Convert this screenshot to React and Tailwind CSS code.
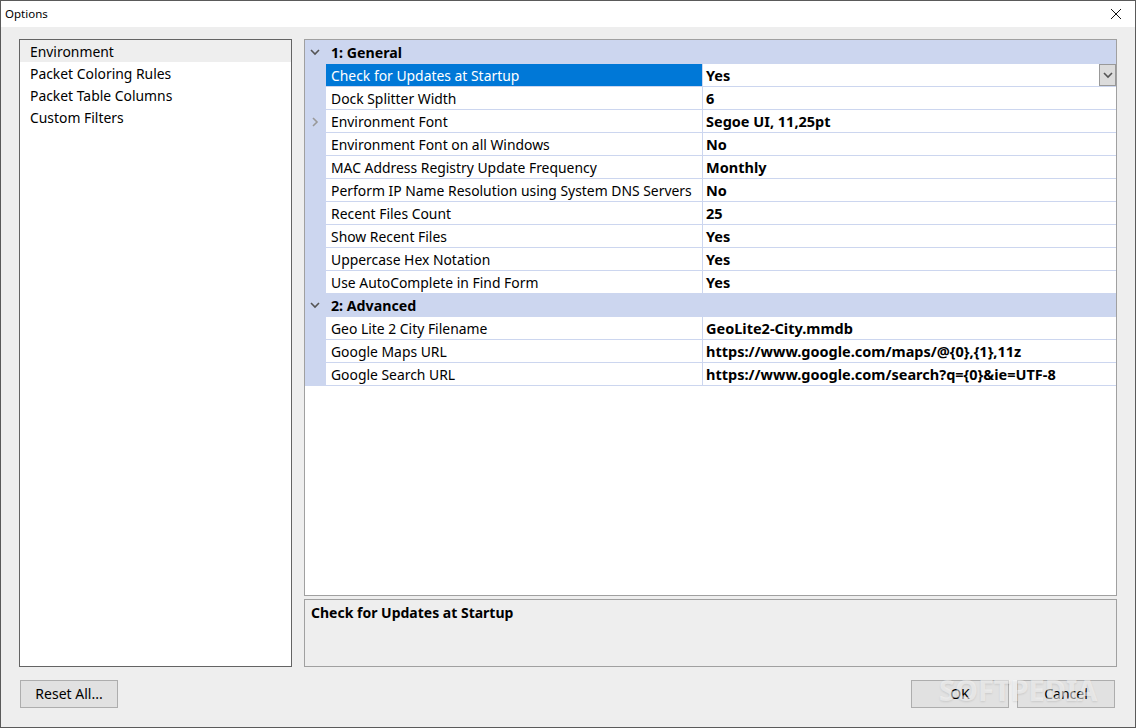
import React from "react";

const general = [
  ["Check for Updates at Startup", "Yes"],
  ["Dock Splitter Width", "6"],
  ["Environment Font", "Segoe UI, 11,25pt"],
  ["Environment Font on all Windows", "No"],
  ["MAC Address Registry Update Frequency", "Monthly"],
  ["Perform IP Name Resolution using System DNS Servers", "No"],
  ["Recent Files Count", "25"],
  ["Show Recent Files", "Yes"],
  ["Uppercase Hex Notation", "Yes"],
  ["Use AutoComplete in Find Form", "Yes"],
];

const advanced = [
  ["Geo Lite 2 City Filename", "GeoLite2-City.mmdb"],
  ["Google Maps URL", "https://www.google.com/maps/@{0},{1},11z"],
  ["Google Search URL", "https://www.google.com/search?q={0}&ie=UTF-8"],
];

const pages = ["Environment", "Packet Coloring Rules", "Packet Table Columns", "Custom Filters"];

function ChevronDown() {
  return (
    <svg width="10" height="7" viewBox="0 0 10 7" fill="none" stroke="#555" strokeWidth="1.6">
      <path d="M1 1l4 4 4-4" />
    </svg>
  );
}

function ChevronRight() {
  return (
    <svg width="7" height="10" viewBox="0 0 7 10" fill="none" stroke="#999" strokeWidth="1.6">
      <path d="M1 1l4 4-4 4" />
    </svg>
  );
}

function GroupHeader({ title, first }) {
  return (
    <div className={`flex bg-[#ccd6ef] ${first ? "h-6" : "h-[23px]"} items-center`}>
      <div className="w-[21px] flex justify-center pr-px">
        <ChevronDown />
      </div>
      <div className={`pl-[5px] font-bold text-[14.2px] ${first ? "pt-0.5" : ""}`}>{title}</div>
    </div>
  );
}

function Row({ label, value, selected, marker }) {
  return (
    <div className="flex h-[23px] bg-[#ccd6ef]">
      <div className="w-[21px] flex items-center justify-center">{marker && <ChevronRight />}</div>
      <div className="flex-1 flex bg-white border-b border-[#ccd6ef]">
        <div
          className={`w-[377px] pl-[5px] border-r border-[#ccd6ef] leading-[24px] whitespace-nowrap ${
            selected ? "bg-[#0078d7] text-white" : ""
          }`}
        >
          {label}
        </div>
        <div className="flex-1 pl-[3px] font-bold text-[14.5px] leading-[22px] whitespace-nowrap">{value}</div>
        {selected && (
          <div className="w-[17px] bg-[#dcdcdc] border border-[#999999] flex items-center justify-center">
            <ChevronDown />
          </div>
        )}
      </div>
    </div>
  );
}

function Btn({ children }) {
  return (
    <div className="w-[98px] h-7 bg-[#e1e1e1] border border-[#adadad] flex items-center justify-center leading-[28px] text-[14px]">
      {children}
    </div>
  );
}

export default function App() {
  return (
    <div
      className="relative w-[1136px] h-[728px] flex flex-col bg-[#eeeeee] border border-[#5a5a5a] text-[13.9px] text-black overflow-hidden"
      style={{ fontFamily: '"Noto Sans", sans-serif' }}
    >
      <div className="h-[26px] shrink-0 bg-white flex items-center justify-between pl-1 pr-[13px] text-[11.5px]">
        <span>Options</span>
        <svg width="12" height="12" viewBox="0 0 12 12" stroke="#111" strokeWidth="1">
          <path d="M1 1l10 10M11 1L1 11" />
        </svg>
      </div>

      <div className="flex-1 flex flex-col pt-3 px-[18px]">
        <div className="flex gap-3 h-[628px]">
          <div className="w-[273px] bg-white border border-[#646464]">
            {pages.map((p, i) => (
              <div key={p} className={`h-[22px] pl-[10px] leading-[24px] ${i === 0 ? "bg-[#eeeeee]" : ""}`}>
                {p}
              </div>
            ))}
          </div>

          <div className="flex-1 flex flex-col gap-[3px]">
            <div className="h-[557px] bg-white border border-[#a0a0a0]">
              <GroupHeader title="1: General" first />
              {general.map(([l, v], i) => (
                <Row key={l} label={l} value={v} selected={i === 0} marker={i === 2} />
              ))}
              <GroupHeader title="2: Advanced" />
              {advanced.map(([l, v]) => (
                <Row key={l} label={l} value={v} />
              ))}
            </div>
            <div className="flex-1 border border-[#a0a0a0] px-1.5 pt-0.5 text-[14px] font-bold">
              Check for Updates at Startup
            </div>
          </div>
        </div>

        <div className="flex justify-between mt-[13px] pl-px pr-0.5">
          <Btn>Reset All...</Btn>
          <div className="flex gap-2">
            <Btn>OK</Btn>
            <Btn>Cancel</Btn>
          </div>
        </div>
      </div>

      {/* watermark sits over the buttons */}
      <div className="absolute left-[938px] top-[674px] text-[29px] font-bold text-white/50 [text-shadow:0_1px_2px_rgba(0,0,0,0.1)] leading-none whitespace-nowrap pointer-events-none">
        SOFTPEDIA
      </div>
    </div>
  );
}
